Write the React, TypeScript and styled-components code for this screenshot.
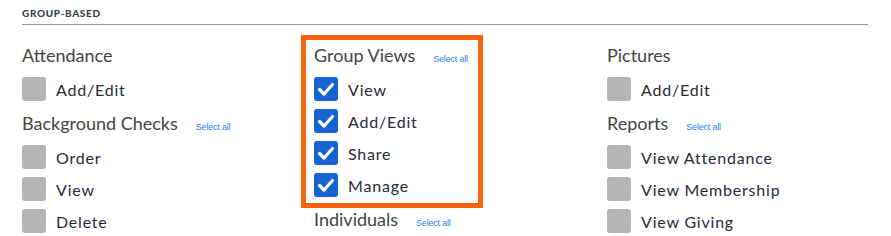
import React from "react";
import styled, { createGlobalStyle } from "styled-components";

const Global = createGlobalStyle`
  html, body { margin: 0; padding: 0; background: #fff; }
  body { font-family: Lato, "Noto Sans", sans-serif; }
`;

const Page = styled.div`
  width: 891px;
  height: 236px;
  overflow: hidden;
  padding: 0 23px 0 22px;
  box-sizing: border-box;
`;

const SectionTitle = styled.div`
  font-family: Lato, sans-serif;
  font-weight: 900;
  font-size: 10px;
  letter-spacing: 0.65px;
  color: #3a3f4b;
  text-transform: uppercase;
  padding-top: 7px;
  box-sizing: border-box;
  line-height: 12px;
  border-bottom: 1px solid #999;
  height: 25px;
`;

const Columns = styled.div`
  display: grid;
  grid-template-columns: 292px 293px 1fr;
  padding-top: 12px;
`;

const Column = styled.div`
  display: flex;
  flex-direction: column;
`;

const Group = styled.div`
  position: relative;
  display: flex;
  flex-direction: column;
`;

const Highlight = styled.div`
  position: absolute;
  left: -13px;
  top: -2px;
  width: 182px;
  bottom: -7px;
  border: 5px solid #fd600d;
  box-sizing: border-box;
  pointer-events: none;
`;

const Heading = styled.div`
  display: flex;
  align-items: baseline;
  height: 36px;
  gap: 18px;
`;

const HeadingText = styled.span`
  font-size: 18px;
  line-height: 36px;
  color: #444;
`;

const SelectAll = styled.a`
  font-family: "Liberation Sans", Arial, sans-serif;
  font-size: 9px;
  color: #2d7ff0;
  cursor: pointer;
  letter-spacing: -0.2px;
`;

const Row = styled.label`
  display: flex;
  align-items: center;
  height: 32px;
  gap: 10px;
`;

const Box = styled.span<{ $checked?: boolean }>`
  width: 24px;
  height: 24px;
  border-radius: 3px;
  background: ${(p) => (p.$checked ? "#1664d4" : "#b5b5b5")};
  display: flex;
  align-items: center;
  justify-content: center;
  flex: none;
`;

const LabelText = styled.span`
  font-size: 16px;
  letter-spacing: 0.8px;
  color: #2a2a3c;
`;

const Check = () => (
  <svg width="24" height="24" viewBox="0 0 24 24">
    <path d="M5.5 12.5 L10 17 L18.5 7.5" fill="none" stroke="#fff" strokeWidth="3.2" strokeLinecap="round" strokeLinejoin="round" />
  </svg>
);

type Item = { label: string; checked?: boolean };
type G = { title: string; selectAll?: boolean; items: Item[]; highlight?: boolean };

const columns: G[][] = [
  [
    { title: "Attendance", items: [{ label: "Add/Edit" }] },
    { title: "Background Checks", selectAll: true, items: [{ label: "Order" }, { label: "View" }, { label: "Delete" }] },
  ],
  [
    {
      title: "Group Views",
      selectAll: true,
      highlight: true,
      items: [
        { label: "View", checked: true },
        { label: "Add/Edit", checked: true },
        { label: "Share", checked: true },
        { label: "Manage", checked: true },
      ],
    },
    { title: "Individuals", selectAll: true, items: [] },
  ],
  [
    { title: "Pictures", items: [{ label: "Add/Edit" }] },
    {
      title: "Reports",
      selectAll: true,
      items: [{ label: "View Attendance" }, { label: "View Membership" }, { label: "View Giving" }],
    },
  ],
];

export default function App() {
  return (
    <Page>
      <Global />
      <SectionTitle>Group-Based</SectionTitle>
      <Columns>
        {columns.map((col, ci) => (
          <Column key={ci}>
            {col.map((g) => (
              <Group key={g.title}>
                {g.highlight && <Highlight />}
                <Heading>
                  <HeadingText>{g.title}</HeadingText>
                  {g.selectAll && <SelectAll>Select all</SelectAll>}
                </Heading>
                {g.items.map((it) => (
                  <Row key={it.label}>
                    <Box $checked={it.checked}>{it.checked && <Check />}</Box>
                    <LabelText>{it.label}</LabelText>
                  </Row>
                ))}
              </Group>
            ))}
          </Column>
        ))}
      </Columns>
    </Page>
  );
}
